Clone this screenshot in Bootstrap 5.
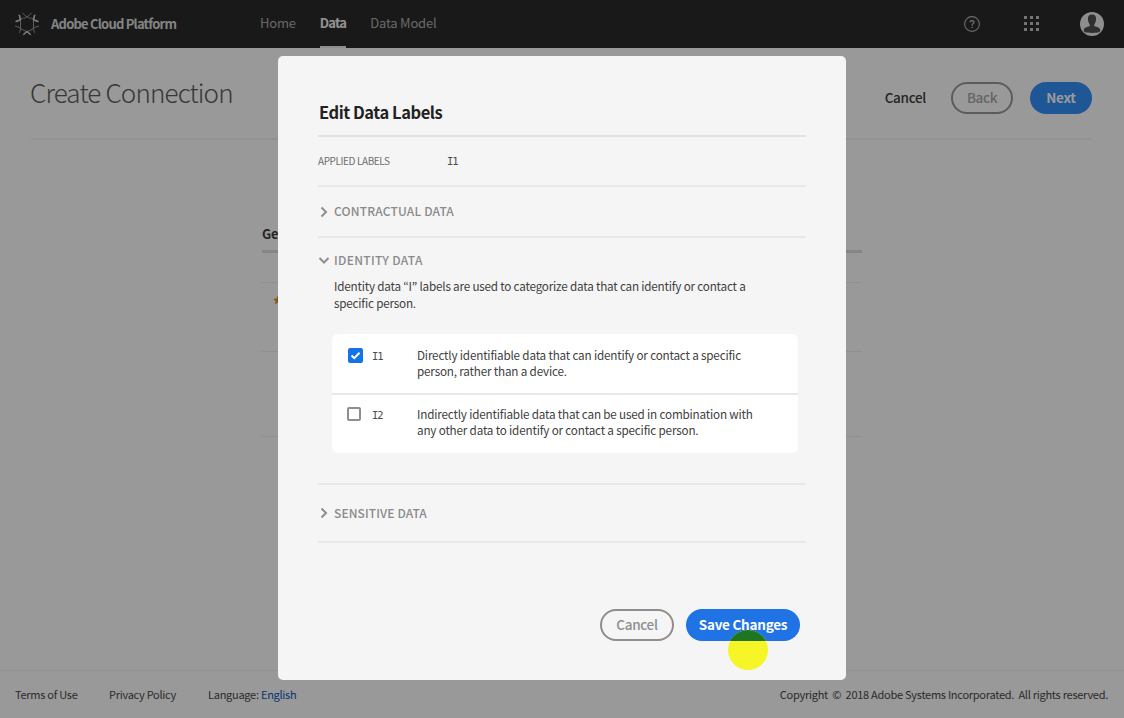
<!DOCTYPE html>
<html lang="en">
<head>
<meta charset="utf-8">
<title>Adobe Cloud Platform</title>
<link rel="stylesheet" href="https://cdn.jsdelivr.net/npm/bootstrap@5.3.0/dist/css/bootstrap.min.css">
<style>
  body { font-family: "Noto Sans CJK JP", "Noto Sans", sans-serif; font-size: 11.7px; letter-spacing: -.2px; line-height: 16px; color: #404040; background: #fff; height: 718px; overflow: hidden; }
  .tx { white-space: nowrap; }
  .topbar { height: 48px; background: #2a2a2a; padding: 0 20px 0 15px; }
  .brand-name { font-size: 13px; font-weight: 700; color: #dcdcdc; margin-left: 12px; width: 209px; letter-spacing: -.78px; }
  .topbar .nav-link { font-size: 13px; height: 48px; line-height: 45px; padding: 0; color: #b0b0b0; margin-right: 24px; letter-spacing: -.22px; }
  .topbar .nav-link.active { color: #f5f5f5; font-weight: 700; border-bottom: 2px solid #eee; letter-spacing: -.75px; }
  .icon-help { margin-right: 44px; }
  .icon-apps { margin-right: 41px; }
  .page-head { margin: 0 32px 0 31px; height: 92px; border-bottom: 2px solid #f4f4f4; padding-top: 10px; }
  .page-head h1 { font-size: 26px; line-height: 32px; font-weight: 300; color: #5c5c5c; margin: 0 0 12px -1px; letter-spacing: -.85px; }
  .pill { height: 32px; border-radius: 16px; border: 2px solid transparent; padding: 0; font-size: 13.5px; letter-spacing: -.32px; font-weight: 500; line-height: 27px; text-align: center; }
  .pill-gray { border-color: #8e8e8e; color: #8e8e8e; width: 74px; }
  .pill-blue { background: #1f73e5; color: #fff; width: 114px; font-weight: 700; letter-spacing: -.25px; line-height: 26px; }
  .page-head .pill-plain { color: #3c3c3c; margin-right: 23px; }
  .page-head .pill-gray { border-color: #999; color: #a8a8a8; width: 62px; margin-right: 17px; }
  .page-head .pill-blue { background: #3290fa; width: 62px; line-height: 27px; }
  .form-area { width: 600px; margin: 85px auto 0; height: 445px; }
  .form-area .ttl { font-size: 12.8px; font-weight: 700; line-height: 18px; height: 28px; border-bottom: 3px solid #e0e0e0; color: #3c3c3c; }
  .form-line { border-bottom: 1px solid #efefef; height: 30px; }
  .form-line.star { color: #e68619; font-size: 19px; font-weight: 700; padding: 13px 0 0 11px; line-height: 16px; height: 69px; }
  .form-line.tall { height: 85px; }
  .page-foot { height: 48px; border-top: 1px solid #f2f2f2; padding: 0 16px 2px 15px; font-size: 11px; letter-spacing: -.27px; color: #484848; }
  .page-foot .terms { width: 94px; }
  .page-foot .privacy { width: 99px; }
  .page-foot a { color: #0b57c2; text-decoration: none; }
  .veil { position: fixed; inset: 0; background: rgba(0,0,0,.4); }
  .dialog { width: 568px; height: 624px; background: #f5f5f5; border-radius: 5px; padding: 45px 40px 0; }
  .dialog h2 { font-size: 16.5px; letter-spacing: -.45px; line-height: 22px; font-weight: 700; color: #222; margin: 0; padding-left: 1px; height: 36px; border-bottom: 2px solid #e1e1e1; }
  .sec { border-bottom: 2px solid #e8e8e8; }
  .applied { height: 50px; }
  .applied-key { width: 129px; font-size: 10px; color: #6e6e6e; letter-spacing: -.4px; }
  .sec-contract { height: 51px; }
  .sec-contract .tx { padding-bottom: 2px; }
  .sec-identity { height: 247px; }
  .sec-identity .sec-title { padding-top: 14px; letter-spacing: .3px; }
  .sec-identity p { padding: 9px 0 23px 16px; line-height: 17px; }
  .sec-sensitive { height: 58px; }
  .sec-title { font-size: 12px; font-weight: 500; line-height: 16px; color: #8a8a8a; letter-spacing: .18px; }
  .sec-title svg { width: 12px; height: 12px; margin-right: 4px; fill: none; stroke: #8e8e8e; stroke-width: 2; }
  .sec-sensitive.sec-title { letter-spacing: .1px; }
  .label-box { background: #fff; border-radius: 6px; width: 466px; margin-left: 14px; }
  .label-row { height: 59px; padding: 14px 0 0 16px; letter-spacing: -.18px; }
  .label-row + .label-row { border-top: 2px solid #e8e8e8; height: 60px; padding-top: 12px; }
  .label-text { margin-top: -1px; }
  .tick { width: 15px; height: 15px; overflow: visible; }
  .code { width: 45px; margin-left: 9px; font-family: "DejaVu Sans Mono", monospace; font-size: 10.5px; color: #4b4b4b; letter-spacing: -1px; }
  .actions { padding: 66px 6px 0 0; gap: 12px; }
  .pointer-over { position: absolute; left: 728px; top: 630px; }
</style>
</head>
<body>
<div class="d-flex flex-column h-100">
  <nav class="topbar d-flex align-items-center flex-shrink-0">
    <svg width="24" height="24" viewBox="0 0 24 24" fill="none" stroke="#a5a5a5" stroke-width=".9" stroke-linecap="round"><path d="M7.500 1q2 3 7.500 5.500M16.500 1q-2 3-7.500 5.500M8.500 18q3.500 1.200 7.500 5M15.500 18q-3.500 1.200-7.500 5" /><path d="M4 3q2.300 4 1.500 7.500M0 9.500q4-.4 8-3.500M20 3q-2.300 4-1.500 7.500M24 9.500q-4-.4-8-3.500M0 14q4 .5 8 4M5.500 13q1 4-1 7.500M24 14q-4 .5-8 4M18.500 13q-1 4 1 7.500M5.500 9v5M18.500 9v5"/><path stroke="#d0d0d0" stroke-width="1.600" d="M4.500 3.500l1 4-4 2M19.500 3.500l-1 4 4 2M9 22l3-2.500 3 2.500"/></svg>
    <div class="brand-name tx">Adobe Cloud Platform</div>
    <div class="nav flex-grow-1">
      <a class="nav-link tx" href="#">Home</a><a class="nav-link active tx" href="#">Data</a><a class="nav-link tx" href="#">Data Model</a>
    </div>
    <svg class="icon-help" width="16" height="16" viewBox="0 0 16 16"><circle cx="8" cy="8" r="7.400" fill="none" stroke="#b4b4b4" stroke-width="1.100"/><path d="M6 6.300Q6.100 4.700 8 4.700T10 6.300Q10 7 8.900 7.800Q8.100 8.500 8.100 9.500M8.100 10.700v1.400" fill="none" stroke="#b4b4b4" stroke-width="1.400"/></svg>
    <svg class="icon-apps" width="15" height="16" viewBox="0 0 15 16" fill="#c4c4c4"><path d="M0 0h3v3H0zM6 0h3v3H6zM12 0h3v3h-3zM0 6h3v3H0zM6 6h3v3H6zM12 6h3v3h-3zM0 12h3v3H0zM6 12h3v3H6zM12 12h3v3h-3z"/></svg>
    <svg width="24" height="24" viewBox="0 0 24 24"><circle cx="12" cy="12" r="12" fill="#ededed"/><path d="M12 2.500c3 0 4.300 2 4.100 4.800-.1 2.300-1 3.800-1.700 4.900-.5 1.200 0 2 1 2.400 2.500.8 4.600 1.200 4.900 3.500.1 1.900-1.300 2.900-8.300 2.900s-8.400-1-8.300-2.900c.3-2.300 2.400-2.700 4.900-3.500 1-.4 1.500-1.200 1-2.400-.7-1.100-1.600-2.600-1.700-4.900C7.700 4.500 9 2.500 12 2.500z" fill="#505050"/></svg>
  </nav>
  <header class="page-head d-flex align-items-center flex-shrink-0">
    <h1 class="flex-grow-1 tx">Create Connection</h1>
    <span class="pill pill-plain tx">Cancel</span>
    <span class="pill pill-gray tx">Back</span>
    <span class="pill pill-blue tx">Next</span>
  </header>
  <main class="form-area flex-shrink-0">
    <div class="ttl">General</div>
    <div class="form-line"></div>
    <div class="form-line star">*</div>
    <div class="form-line tall"></div>
  </main>
  <footer class="page-foot d-flex align-items-center flex-shrink-0">
    <span class="tx terms">Terms of Use</span><span class="tx privacy">Privacy Policy</span><span class="tx flex-grow-1">Language<a href="#">: English</a></span>
    <span class="tx">Copyright &nbsp;© &nbsp;2018 Adobe Systems Incorporated. &nbsp;All rights reserved.</span>
  </footer>
</div>

<div class="veil d-flex justify-content-center align-items-start pt-5">
  <section class="dialog mt-2" role="dialog">
    <h2 class="tx">Edit Data Labels</h2>
    <div class="sec applied d-flex align-items-center"><span class="tx applied-key">APPLIED LABELS</span><span class="code m-0">I1</span></div>
    <div class="sec sec-title sec-contract d-flex align-items-center"><svg viewBox="0 0 12 12"><path d="M3.500 1.500 8 6l-4.500 4.500"/></svg><span class="tx">CONTRACTUAL DATA</span></div>
    <div class="sec sec-identity">
      <div class="sec-title d-flex align-items-center"><svg viewBox="0 0 12 12"><path d="M1.500 4 6 8.500 10.500 4"/></svg><span class="tx">IDENTITY DATA</span></div>
      <p class="tx m-0">Identity data “I” labels are used to categorize data that can identify or contact a<br>specific person.</p>
      <div class="label-box">
        <div class="label-row d-flex">
          <svg class="tick" viewBox="0 0 15 15"><rect width="15" height="15" rx="2" fill="#1473e6"/><path d="M3.500 7.500 6.300 10.200 11.500 4.700" fill="none" stroke="#fff" stroke-width="2"/></svg>
          <span class="code">I1</span><span class="tx label-text">Directly identifiable data that can identify or contact a specific<br>person, rather than a device.</span>
        </div>
        <div class="label-row d-flex">
          <svg class="tick" viewBox="0 0 15 15"><rect x="0" y="1" width="12" height="12" rx="1" fill="none" stroke="#8e8e8e" stroke-width="2"/></svg>
          <span class="code">I2</span><span class="tx label-text">Indirectly identifiable data that can be used in combination with<br>any other data to identify or contact a specific person.</span>
        </div>
      </div>
    </div>
    <div class="sec sec-title sec-sensitive d-flex align-items-center"><svg viewBox="0 0 12 12"><path d="M3.500 1.500 8 6l-4.500 4.500"/></svg><span class="tx">SENSITIVE DATA</span></div>
    <div class="actions d-flex justify-content-end"><span class="pill pill-gray tx">Cancel</span><span class="pill pill-blue tx">Save Changes</span></div>
  </section>
  <svg class="pointer-over" width="40" height="40"><clipPath id="disc"><circle cx="20" cy="20" r="20"/></clipPath><circle cx="20" cy="20" r="20" fill="#f5f527"/><rect width="40" height="11" fill="#1e7522" clip-path="url(#disc)"/></svg>
</div>
<script src="https://cdn.jsdelivr.net/npm/bootstrap@5.3.0/dist/js/bootstrap.bundle.min.js"></script>
</body>
</html>
